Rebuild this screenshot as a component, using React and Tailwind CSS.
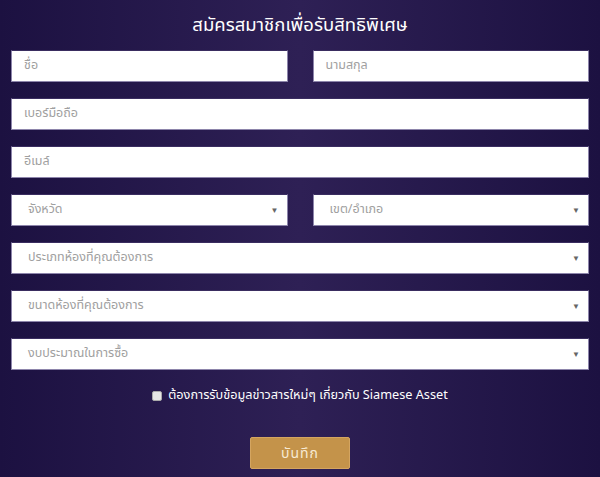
export default function App() {
  const font = { fontFamily: '"Noto Sans Thai", "Noto Sans", "Liberation Sans", sans-serif' };

  const field = "h-8 bg-white border border-[#8d85ab] border-t-[#3a2d60] flex items-center text-[12.5px] text-[#a0a0a0]";

  const Input = ({ label, className = "" }) => (
    <div className={`${field} pl-3 pt-[1px] ${className}`}>{label}</div>
  );

  const Select = ({ label, className = "" }) => (
    <div className={`${field} pl-4 pr-2 pt-[1px] justify-between ${className}`}>
      <span>{label}</span>
      <span className="text-[8px] text-[#666]">▼</span>
    </div>
  );

  return (
    <div
      className="w-[600px] h-[477px] overflow-hidden bg-[linear-gradient(to_right,#1c1141,#2e2055_50%,#1c1141)] px-[11px] pt-[12px]"
      style={font}
    >
      <h1 className="text-center text-white text-[18.5px] leading-[26px] h-[38px]">
        สมัครสมาชิกเพื่อรับสิทธิพิเศษ
      </h1>

      <div className="flex flex-col gap-4">
        <div className="flex gap-[25px]">
          <Input label="ชื่อ" className="flex-1" />
          <Input label="นามสกุล" className="flex-1" />
        </div>
        <Input label="เบอร์มือถือ" />
        <Input label="อีเมล์" />
        <div className="flex gap-[25px]">
          <Select label="จังหวัด" className="flex-1" />
          <Select label="เขต/อำเภอ" className="flex-1" />
        </div>
        <Select label="ประเภทห้องที่คุณต้องการ" />
        <Select label="ขนาดห้องที่คุณต้องการ" />
        <Select label="งบประมาณในการซื้อ" />
      </div>

      <div className="flex justify-center items-center gap-[6px] mt-[19px] h-[14px]">
        <span className="w-[10px] h-[10px] bg-[#e6e6e6] border border-[#aaa] rounded-[2px]" />
        <span className="text-white text-[12.7px]">ต้องการรับข้อมูลข่าวสารใหม่ๆ เกี่ยวกับ Siamese Asset</span>
      </div>

      <div className="flex justify-center mt-[34px]">
        <button className="w-[100px] h-[32px] bg-[#c4934a] text-[#f7ead3] text-[14px] tracking-[1px] rounded-[2px] border border-[#d4a560]">
          บันทึก
        </button>
      </div>
    </div>
  );
}
